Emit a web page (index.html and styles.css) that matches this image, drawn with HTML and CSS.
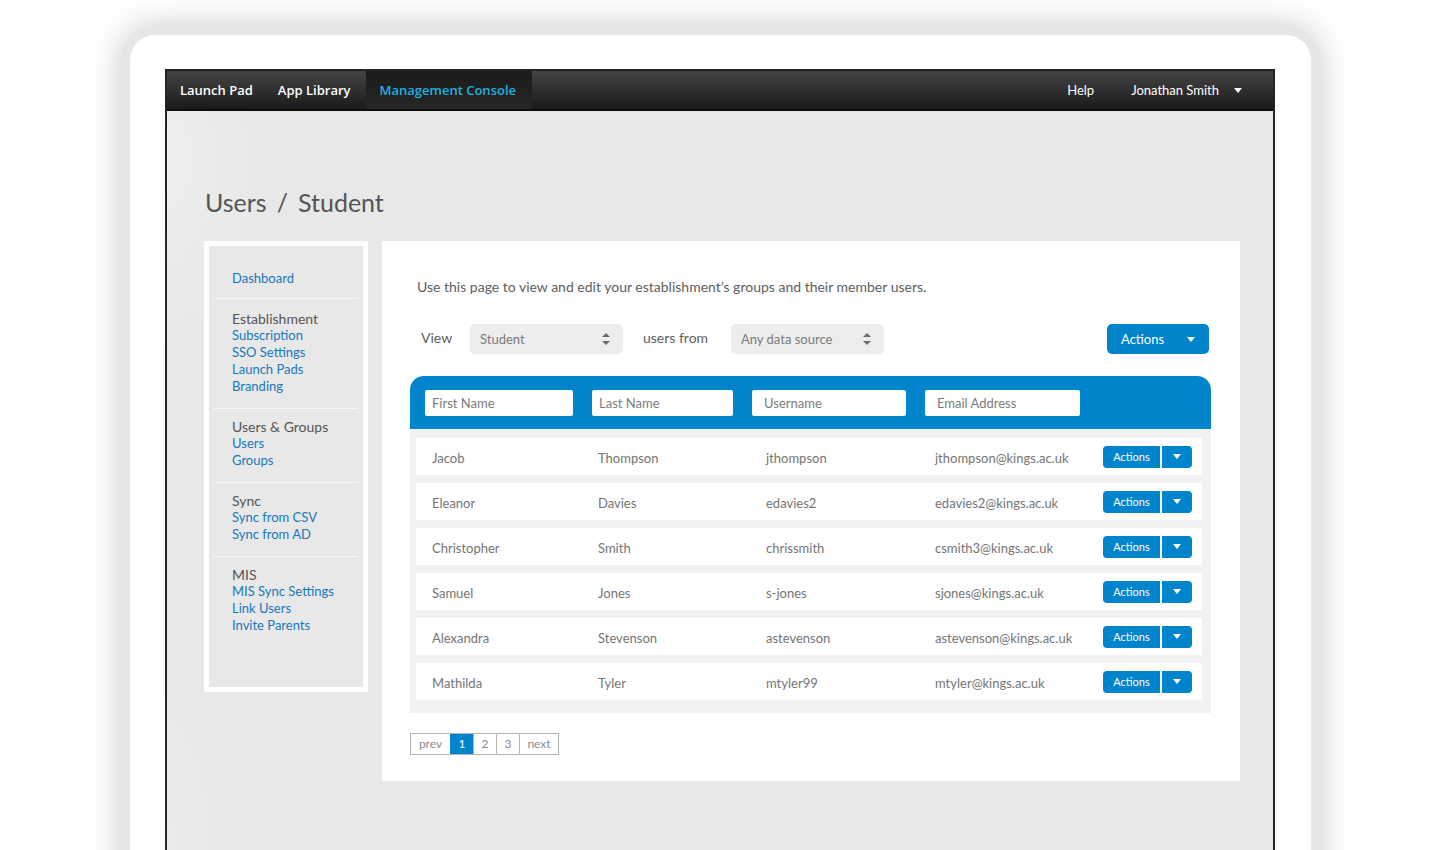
FILE: index.html
```html
<!DOCTYPE html>
<html lang="en">
<head>
<meta charset="utf-8">
<meta name="viewport" content="width=device-width, initial-scale=1">
<title>Management Console – Users</title>
<link rel="stylesheet" href="styles.css">
</head>
<body>
<svg class="sprite" aria-hidden="true">
  <symbol id="caret" viewBox="0 0 8 5"><path d="M0 0h8L4 5z" fill="currentColor"/></symbol>
  <symbol id="sort" viewBox="0 0 8 14"><path d="M4 1l4 4H0zM0 9h8l-4 4z" fill="currentColor"/></symbol>
</svg>
<div class="page">
<div class="device">
  <div class="screen">
    <header class="topbar">
      <nav class="topnav">
        <a class="topnav-link" href="#">Launch Pad</a>
        <a class="topnav-link" href="#">App Library</a>
        <a class="topnav-link is-active" href="#" aria-current="page">Management Console</a>
      </nav>
      <div class="account">
        <a class="account-link" href="#">Help</a>
        <button class="account-menu" type="button">Jonathan Smith <svg class="caret"><use href="#caret"/></svg></button>
      </div>
    </header>
    <main class="content">
      <h1 class="title"><span>Users</span><span>/</span><span>Student</span></h1>
      <div class="columns">
        <nav class="sidebar">
          <section class="group group-top">
            <a href="#">Dashboard</a>
          </section>
          <section class="group group-wide">
            <h2>Establishment</h2>
            <a href="#">Subscription</a>
            <a href="#">SSO Settings</a>
            <a href="#">Launch Pads</a>
            <a href="#">Branding</a>
          </section>
          <section class="group">
            <h2>Users &amp; Groups</h2>
            <a href="#">Users</a>
            <a href="#">Groups</a>
          </section>
          <section class="group">
            <h2>Sync</h2>
            <a href="#">Sync from CSV</a>
            <a href="#">Sync from AD</a>
          </section>
          <section class="group">
            <h2>MIS</h2>
            <a href="#">MIS Sync Settings</a>
            <a href="#">Link Users</a>
            <a href="#">Invite Parents</a>
          </section>
        </nav>
        <section class="panel">
          <p class="intro">Use this page to view and edit your establishment’s groups and their member users.</p>
          <form class="filters">
            <label class="filter-label" for="role">View</label>
            <span class="select"><select id="role"><option>Student</option></select><svg class="sort"><use href="#sort"/></svg></span>
            <label class="filter-label filter-label-wide" for="source">users from</label>
            <span class="select"><select id="source"><option>Any data source</option></select><svg class="sort"><use href="#sort"/></svg></span>
            <button class="actions" type="button">Actions <svg class="caret"><use href="#caret"/></svg></button>
          </form>
          <table class="users">
            <colgroup><col class="col-first"><col class="col-last"><col class="col-user"><col class="col-mail"><col></colgroup>
            <thead>
              <tr>
                <th><input type="text" placeholder="First Name" aria-label="First Name"></th>
                <th><input type="text" placeholder="Last Name" aria-label="Last Name"></th>
                <th><input type="text" placeholder="Username" aria-label="Username"></th>
                <th><input type="text" placeholder="Email Address" aria-label="Email Address"></th>
                <th></th>
              </tr>
            </thead>
            <tbody>
              <tr><td>Jacob</td><td>Thompson</td><td>jthompson</td><td>jthompson@kings.ac.uk</td><td><span class="split"><button type="button">Actions</button><button type="button" aria-label="More actions"><svg class="caret"><use href="#caret"/></svg></button></span></td></tr>
              <tr><td>Eleanor</td><td>Davies</td><td>edavies2</td><td>edavies2@kings.ac.uk</td><td><span class="split"><button type="button">Actions</button><button type="button" aria-label="More actions"><svg class="caret"><use href="#caret"/></svg></button></span></td></tr>
              <tr><td>Christopher</td><td>Smith</td><td>chrissmith</td><td>csmith3@kings.ac.uk</td><td><span class="split"><button type="button">Actions</button><button type="button" aria-label="More actions"><svg class="caret"><use href="#caret"/></svg></button></span></td></tr>
              <tr><td>Samuel</td><td>Jones</td><td>s-jones</td><td>sjones@kings.ac.uk</td><td><span class="split"><button type="button">Actions</button><button type="button" aria-label="More actions"><svg class="caret"><use href="#caret"/></svg></button></span></td></tr>
              <tr><td>Alexandra</td><td>Stevenson</td><td>astevenson</td><td>astevenson@kings.ac.uk</td><td><span class="split"><button type="button">Actions</button><button type="button" aria-label="More actions"><svg class="caret"><use href="#caret"/></svg></button></span></td></tr>
              <tr><td>Mathilda</td><td>Tyler</td><td>mtyler99</td><td>mtyler@kings.ac.uk</td><td><span class="split"><button type="button">Actions</button><button type="button" aria-label="More actions"><svg class="caret"><use href="#caret"/></svg></button></span></td></tr>
            </tbody>
          </table>
          <nav class="pager" aria-label="Pages">
            <a class="pager-step" href="#">prev</a>
            <a class="is-current" href="#" aria-current="page">1</a>
            <a href="#">2</a>
            <a href="#">3</a>
            <a class="pager-step" href="#">next</a>
          </nav>
        </section>
      </div>
    </main>
  </div>
</div>
</div>
</body>
</html>
```
FILE: styles.css
```css
* {
  box-sizing: border-box;
}

body {
  margin: 0;
  background: #fff;
  color: #757575;
  font-family: Lato, "Noto Sans", sans-serif;
  font-size: 13px;
  line-height: 17px;
}

a {
  color: inherit;
  text-decoration: none;
}

button,
input,
select {
  margin: 0;
  border: 0;
  font: inherit;
}

button {
  cursor: pointer;
}

.sprite {
  position: absolute;
  width: 0;
  height: 0;
}

.caret {
  width: 8px;
  height: 5px;
}

.page {
  display: flex;
  min-height: 100vh;
  padding: 26px 120px 0 121px;
  overflow: hidden;
}

.device {
  flex: 1;
  min-width: 0;
  display: flex;
  margin-bottom: -40px;
  padding: 34px 36px 0 35px;
  border: 9px solid #e6e6e6;
  border-bottom: 0;
  border-radius: 34px 34px 0 0;
  background: #fff;
  box-shadow: 0 0 32px rgba(0, 0, 0, 0.22);
}

.screen {
  flex: 1;
  min-width: 0;
  border: 2px solid #242424;
  border-bottom: 0;
  background:
    radial-gradient(ellipse 150px 300px at 0 90px, #eef0ef, rgba(230, 232, 234, 0.7) 60%, rgba(232, 232, 232, 0)),
    radial-gradient(ellipse 90px 260px at 0 780px, #ebedec, rgba(230, 232, 234, 0.7) 60%, rgba(232, 232, 232, 0)),
    linear-gradient(90deg, #e6e9ea, #e8e8e8 30px);
}

.topbar {
  display: flex;
  justify-content: space-between;
  height: 40px;
  border-bottom: 2px solid #0c0c0c;
  background: linear-gradient(#434343, #1b1b1b);
  color: #fff;
}

.topnav {
  display: flex;
  font-family: "Open Sans", Lato, sans-serif;
  font-weight: 600;
}

.topnav-link {
  display: flex;
  align-items: center;
  padding: 0 12px 0 13px;
}

.topnav-link.is-active {
  margin-left: 3px;
  padding: 0 16px 0 14px;
  background: linear-gradient(#1a1b1b, #262626);
  color: #1cb2e2;
}

.account {
  display: flex;
  align-items: center;
  gap: 37px;
  padding-right: 31px;
}

.account-menu {
  display: flex;
  align-items: center;
  gap: 15px;
  padding: 0;
  background: none;
  color: inherit;
}

.content {
  padding: 75px 33px 68px 37px;
}

.title {
  display: flex;
  gap: 10px;
  margin: 0 0 23px 1px;
  color: #555;
  font-size: 25px;
  font-weight: 400;
  line-height: 32px;
}

.columns {
  display: flex;
  align-items: flex-start;
  gap: 14px;
}

.sidebar {
  width: 164px;
  min-height: 451px;
  padding: 0 5px;
  border: 5px solid #fff;
  background: #e8e8e8;
}

.group {
  display: flex;
  flex-direction: column;
  align-items: flex-start;
  padding: 9px 0 13px 18px;
  border-top: 1px solid #f8f8f8;
  color: #1678bd;
}

.group-top {
  padding: 24px 0 11px 18px;
  border-top: 0;
}

.group-wide {
  padding-top: 11px;
}

.group h2 {
  margin: 0;
  color: #555;
  font-size: 14px;
  font-weight: 400;
  line-height: 17px;
}

.panel {
  flex: 1;
  min-width: 0;
  padding: 37px 29px 26px 28px;
  background: #fff;
}

.intro {
  margin: 0 0 28px 7px;
  color: #606060;
  font-size: 14px;
  line-height: 18px;
}

.filters {
  display: flex;
  align-items: center;
  margin-bottom: 22px;
  padding: 0 2px 0 11px;
}

.filter-label {
  width: 49px;
  padding-bottom: 3px;
  color: #606060;
  font-size: 14px;
}

.filter-label-wide {
  width: 88px;
  margin-left: 20px;
}

.select {
  display: flex;
  align-items: center;
  width: 153px;
  position: relative;
}

.select select {
  width: 100%;
  height: 30px;
  padding: 0 26px 0 10px;
  border-radius: 5px;
  appearance: none;
  background: #ededed;
  color: #7a7a7a;
}

.sort {
  position: absolute;
  right: 13px;
  width: 8px;
  height: 14px;
  color: #6c6c6c;
  pointer-events: none;
}

.actions {
  display: flex;
  align-items: center;
  justify-content: space-between;
  width: 102px;
  height: 30px;
  margin-left: auto;
  padding: 0 14px;
  border-radius: 5px;
  background: #0084cc;
  color: #fff;
}

.users {
  width: 100%;
  table-layout: fixed;
  border-spacing: 0;
}

.col-first {
  width: 173px;
}

.col-last {
  width: 160px;
}

.col-user {
  width: 173px;
}

.col-mail {
  width: 174px;
}

.users th {
  height: 53px;
  padding: 0 10px 0 9px;
  background: #0084cc;
  font-weight: 400;
}

.users th:first-child {
  padding-left: 15px;
  border-top-left-radius: 14px;
}

.users th:last-child {
  border-top-right-radius: 14px;
}

.users input {
  display: block;
  width: 100%;
  height: 26px;
  padding: 0 12px;
  border-radius: 2px;
  background: #fff;
}

.users th:nth-child(-n+2) input {
  padding: 0 7px;
}

.users input::placeholder {
  color: #7c7c7c;
  opacity: 1;
}

.users td {
  height: 45px;
  padding: 3px 0 0;
  border-bottom: 8px solid #f2f2f2;
}

.users td:nth-child(1) {
  padding-left: 16px;
  border-left: 6px solid #f2f2f2;
}

.users td:nth-child(2) {
  padding-left: 15px;
}

.users td:nth-child(3) {
  padding-left: 23px;
}

.users td:nth-child(4) {
  padding-left: 19px;
}

.users td:nth-child(5) {
  padding: 0 0 0 13px;
  border-right: 9px solid #f2f2f2;
}

.users tbody tr:first-child td {
  height: 54px;
  border-top: 9px solid #f2f2f2;
}

.users tbody tr:last-child td {
  height: 50px;
  border-bottom-width: 13px;
}

.split {
  display: flex;
  gap: 2px;
  width: 89px;
  height: 22px;
}

.split button {
  padding: 0;
  background: #0084cc;
  color: #fff;
  font-size: 11px;
  line-height: 22px;
}

.split button:first-child {
  flex: 1;
  border-radius: 4px 0 0 4px;
}

.split button:last-child {
  display: flex;
  align-items: center;
  justify-content: center;
  width: 30px;
  border-radius: 0 4px 4px 0;
}

.pager {
  display: inline-flex;
  margin-top: 20px;
  border: 1px solid #b4b4b4;
  color: #8c8c8c;
  font-size: 12px;
  line-height: 20px;
  text-align: center;
}

.pager a {
  width: 23px;
  border-left: 1px solid #b4b4b4;
}

.pager .pager-step {
  width: 39px;
}

.pager a:first-child {
  border-left: 0;
}

.pager .is-current {
  border-color: #0084cc;
  background: #0084cc;
  color: #fff;
}
```
